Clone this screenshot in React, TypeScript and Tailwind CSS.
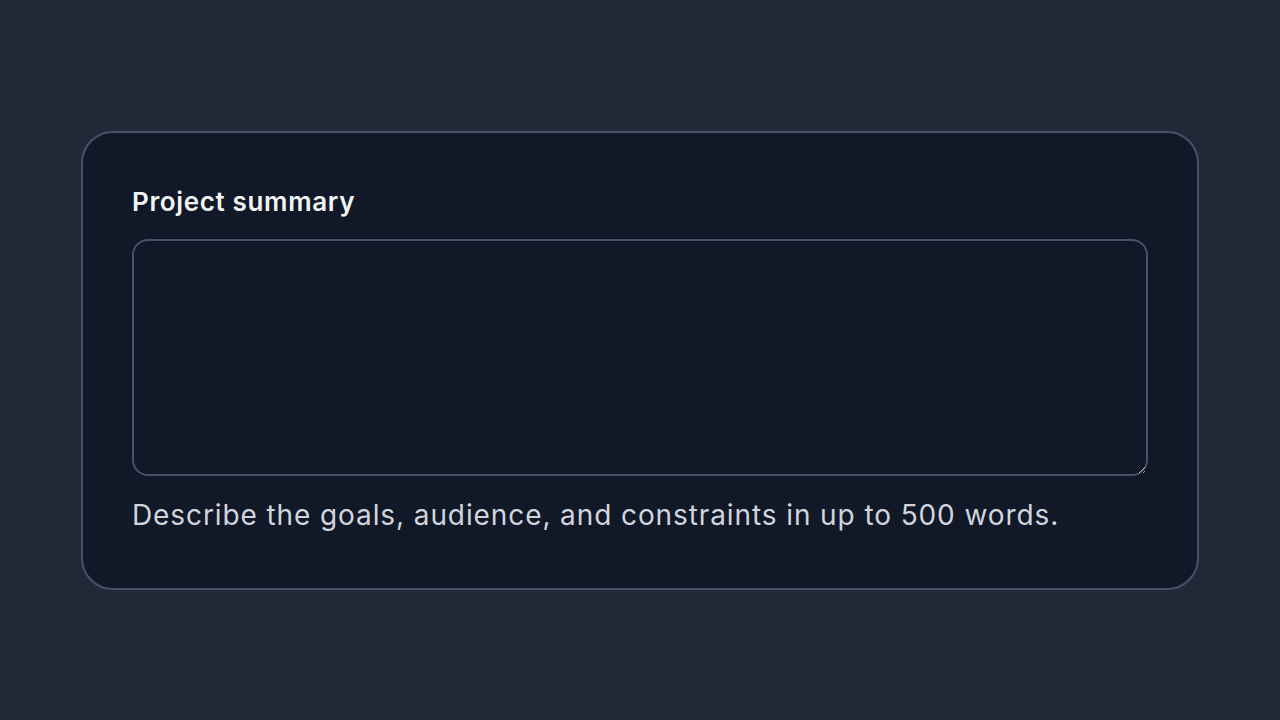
export default function App() {
  return (
    <div className="min-h-screen w-full bg-[#232839] flex items-center justify-center" style={{ fontFamily: 'Inter, "Noto Sans", sans-serif' }}>
      <div className="w-[1118px] rounded-[32px] border-2 border-[#465266] bg-[#111827] px-[49px] pt-[49px] pb-[52px]">
        <label htmlFor="summary" className="block text-[26px] leading-[40px] font-semibold tracking-[0.65px] text-[#f3f4f6] mb-[17px]">
          Project summary
        </label>
        <textarea
          id="summary"
          className="block w-full h-[237px] rounded-[16px] border-2 border-[#465266] bg-[#111827] text-[#e5e7eb] outline-none [color-scheme:dark]"
        />
        <p className="mt-[18px] text-[28px] leading-[42px] tracking-[0.9px] text-[#d1d5db]">
          Describe the goals, audience, and constraints in up to 500 words.
        </p>
      </div>
    </div>
  );
}
